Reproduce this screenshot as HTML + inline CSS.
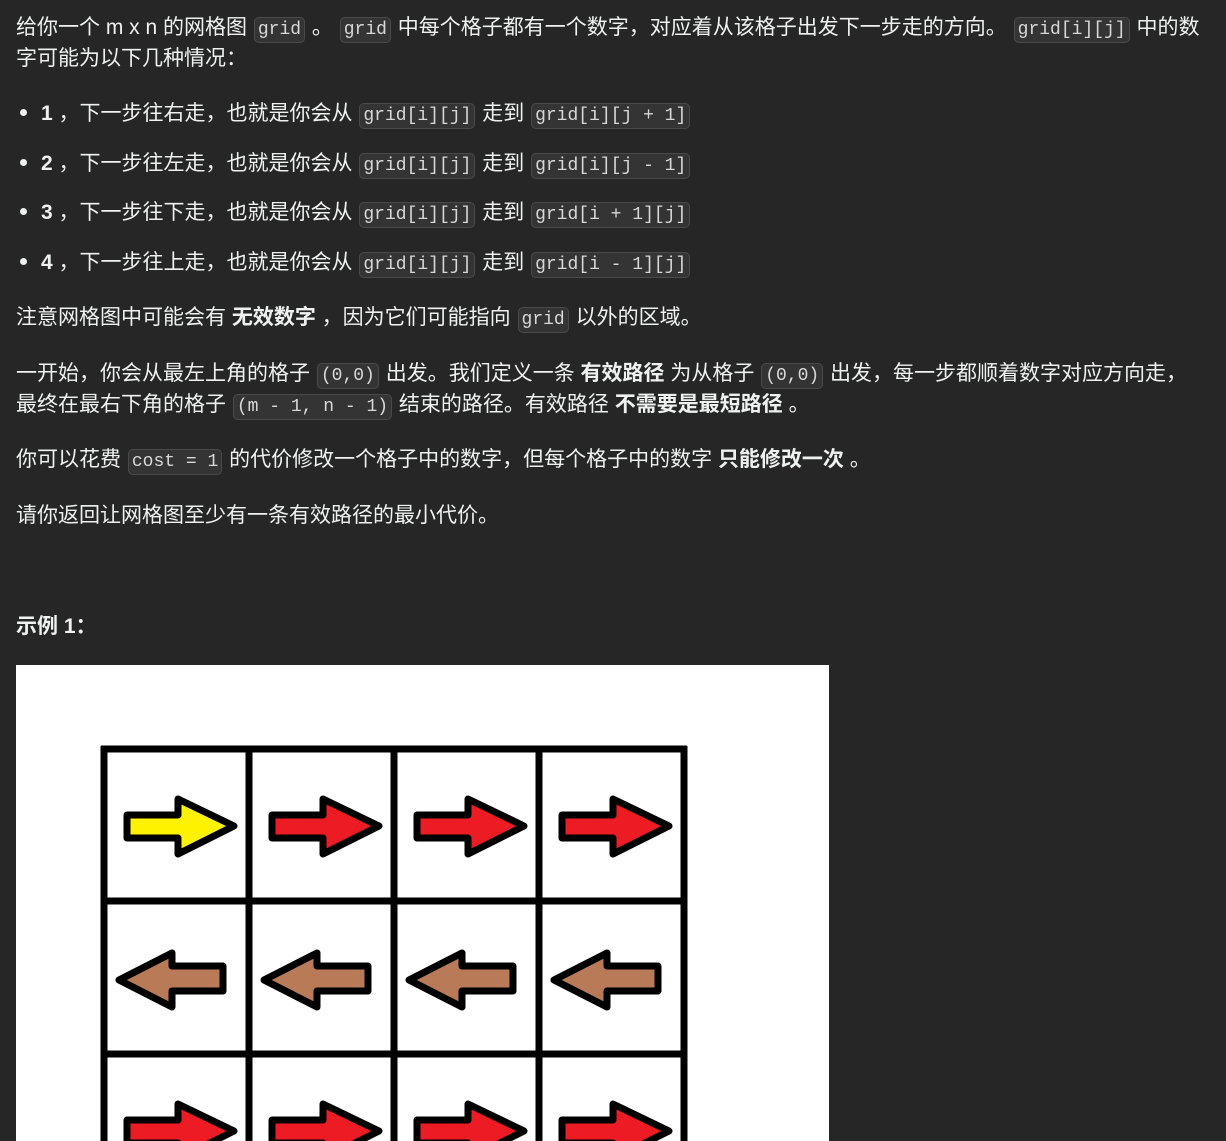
<!DOCTYPE html>
<html><head><meta charset="utf-8"><style>
html,body{margin:0;padding:0;background:#262626;width:1226px;height:1141px;overflow:hidden}
body{font-family:"Liberation Sans","Noto Sans CJK SC",sans-serif;color:#eff1f1;font-size:21px;position:relative}
.l{position:absolute;left:16px;white-space:nowrap;line-height:31px}
code{font-family:"Liberation Mono","DejaVu Sans Mono",monospace;font-size:18px;background:#343434;border:1px solid #4a4a4a;border-radius:5px;padding:2px 3px;color:#d8d8d8;margin:0 1px}
b{font-weight:bold}
.dot{display:inline-block;width:7px;height:7px;border-radius:50%;background:#eff1f1;margin:0 14px 3px 4px;vertical-align:middle}
</style></head><body>
<div class="l" style="top:12px">给你一个 m x n 的网格图 <code>grid</code> 。 <code>grid</code> 中每个格子都有一个数字，对应着从该格子出发下一步走的方向。 <code>grid[i][j]</code> 中的数</div>
<div class="l" style="top:43px">字可能为以下几种情况：</div>
<div class="l" style="top:98px"><span class="dot"></span><b>1</b> ，下一步往右走，也就是你会从 <code>grid[i][j]</code> 走到 <code>grid[i][j + 1]</code></div>
<div class="l" style="top:148px"><span class="dot"></span><b>2</b> ，下一步往左走，也就是你会从 <code>grid[i][j]</code> 走到 <code>grid[i][j - 1]</code></div>
<div class="l" style="top:197px"><span class="dot"></span><b>3</b> ，下一步往下走，也就是你会从 <code>grid[i][j]</code> 走到 <code>grid[i + 1][j]</code></div>
<div class="l" style="top:247px"><span class="dot"></span><b>4</b> ，下一步往上走，也就是你会从 <code>grid[i][j]</code> 走到 <code>grid[i - 1][j]</code></div>
<div class="l" style="top:302px">注意网格图中可能会有 <b>无效数字</b> ，因为它们可能指向 <code>grid</code> 以外的区域。</div>
<div class="l" style="top:358px">一开始，你会从最左上角的格子 <code>(0,0)</code> 出发。我们定义一条 <b>有效路径</b> 为从格子 <code>(0,0)</code> 出发，每一步都顺着数字对应方向走，</div>
<div class="l" style="top:389px">最终在最右下角的格子 <code>(m - 1, n - 1)</code> 结束的路径。有效路径 <b>不需要是最短路径</b> 。</div>
<div class="l" style="top:444px">你可以花费 <code>cost = 1</code> 的代价修改一个格子中的数字，但每个格子中的数字 <b>只能修改一次</b> 。</div>
<div class="l" style="top:500px">请你返回让网格图至少有一条有效路径的最小代价。</div>
<div class="l" style="top:611px"><b>示例 1：</b></div>
<svg style="position:absolute;left:16px;top:665px" width="813" height="476" viewBox="16 665 813 476">
<rect x="16" y="665" width="813" height="476" fill="#fff"/>
<defs>
<path id="r" d="M20,63 H71 V47 L127,74 L71,102 V86 H20 Z" stroke="#000" stroke-width="7" stroke-linejoin="round"/>
<path id="lf" d="M12,76 L65,49 V62 H116 V87 H65 V103 Z" stroke="#000" stroke-width="7" stroke-linejoin="round"/>
</defs>
<g>
<use href="#r" x="107" y="752" fill="#fff200"/>
<use href="#r" x="252" y="752" fill="#ed1c24"/>
<use href="#r" x="397" y="752" fill="#ed1c24"/>
<use href="#r" x="542" y="752" fill="#ed1c24"/>
<use href="#lf" x="107" y="904" fill="#b97a57"/>
<use href="#lf" x="252" y="904" fill="#b97a57"/>
<use href="#lf" x="397" y="904" fill="#b97a57"/>
<use href="#lf" x="542" y="904" fill="#b97a57"/>
<use href="#r" x="107" y="1057" fill="#ed1c24"/>
<use href="#r" x="252" y="1057" fill="#ed1c24"/>
<use href="#r" x="397" y="1057" fill="#ed1c24"/>
<use href="#r" x="542" y="1057" fill="#ed1c24"/>
</g>
<g stroke="#000" stroke-width="7">
<line x1="104" y1="746" x2="104" y2="1141"/>
<line x1="249" y1="746" x2="249" y2="1141"/>
<line x1="394" y1="746" x2="394" y2="1141"/>
<line x1="539" y1="746" x2="539" y2="1141"/>
<line x1="684" y1="746" x2="684" y2="1141"/>
<line x1="101" y1="749" x2="687" y2="749"/>
<line x1="101" y1="901" x2="687" y2="901"/>
<line x1="101" y1="1054" x2="687" y2="1054"/>
</g>
</svg>
</body></html>
